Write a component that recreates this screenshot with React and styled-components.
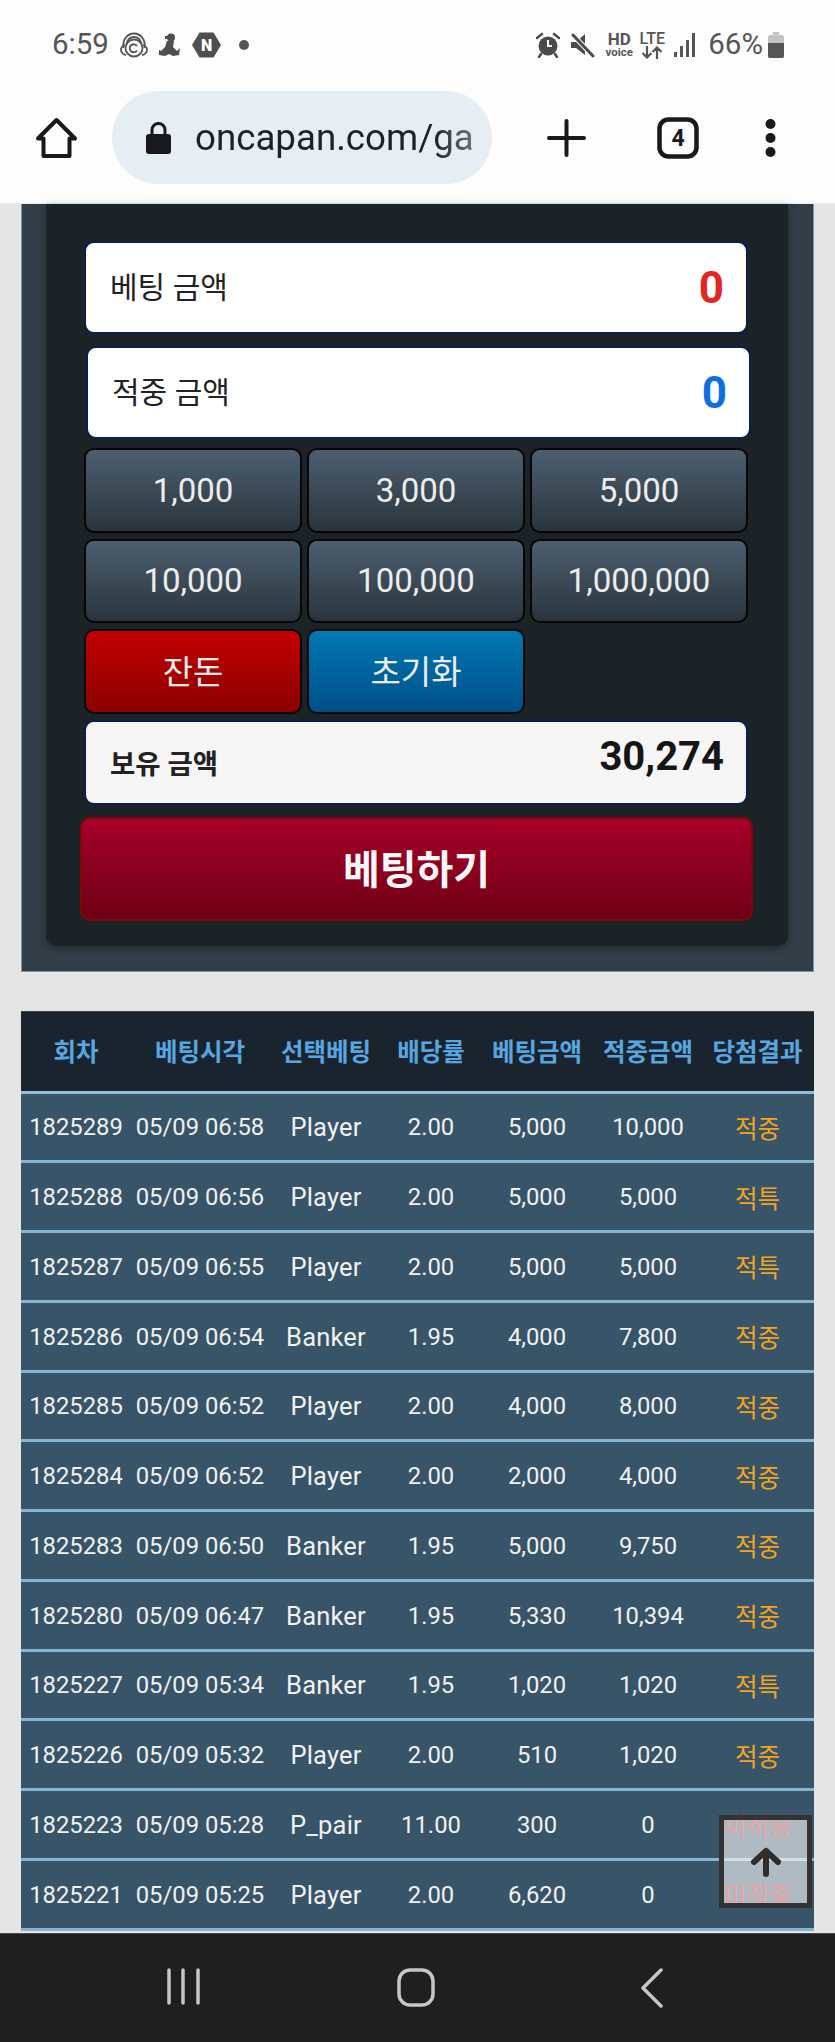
import styled, { createGlobalStyle } from 'styled-components';

const GlobalStyle = createGlobalStyle`
  html, body {
    margin: 0;
    padding: 0;
    background: #e5e5e5;
  }
  * {
    box-sizing: border-box;
  }
`;

const Screen = styled.div`
  position: relative;
  width: 835px;
  height: 2042px;
  overflow: hidden;
  display: flex;
  flex-direction: column;
  font-family: Roboto, "Noto Sans CJK KR", sans-serif;
  background: #e5e5e5;
`;

const Chrome = styled.header`
  height: 204px;
  flex: none;
  background: #fdfdfe;
  border-bottom: 1px solid #e8edf1;
`;

const StatusBar = styled.div`
  height: 90px;
  display: flex;
  align-items: center;
  justify-content: space-between;
  padding: 0 51px 0 52px;
  color: #555;
`;

const StatusGroup = styled.div`
  display: flex;
  align-items: center;
`;

const StatusText = styled.span`
  font-size: 29.5px;
  line-height: 1;
  margin-right: ${props => props.$mr || 0}px;
  margin-left: ${props => props.$ml || 0}px;
`;

const StatusIcon = styled.svg`
  display: block;
  flex: none;
  margin-left: ${props => props.$ml || 0}px;
`;

const HdBadge = styled.div`
  display: flex;
  flex-direction: column;
  align-items: center;
  margin-left: ${props => props.$ml}px;
  width: 26px;
  color: #555;
  font-weight: 700;
  font-size: 17px;
  line-height: 15px;
  small {
    display: block;
    font-size: 11.5px;
    font-weight: 700;
    line-height: 11px;
  }
`;

const LteBadge = styled(HdBadge)`
  font-weight: 500;
  font-size: 16px;
  line-height: 14px;
`;

const ToolRow = styled.div`
  height: 113px;
  display: flex;
  align-items: flex-start;
  padding-left: 35px;
`;

const ToolIcon = styled.svg`
  display: block;
  flex: none;
  margin-left: ${props => props.$ml || 0}px;
  margin-top: ${props => props.$mt || 0}px;
`;

const UrlPill = styled.div`
  width: 380px;
  height: 93px;
  margin-left: 34px;
  margin-top: 1px;
  border-radius: 47px;
  background: #e6edf3;
  display: flex;
  align-items: center;
  padding-left: 34px;
`;

const LockIcon = styled.svg`
  display: block;
  flex: none;
`;

const UrlText = styled.div`
  width: 278px;
  margin-left: 24px;
  overflow: hidden;
  white-space: nowrap;
  font-size: 36.7px;
  color: #1c2226;
  -webkit-mask-image: linear-gradient(90deg, #000 86%, rgba(0, 0, 0, 0.6) 100%);
  mask-image: linear-gradient(90deg, #000 86%, rgba(0, 0, 0, 0.6) 100%);
`;

const Main = styled.main`
  flex: 1;
  padding: 0 21px;
  min-height: 0;
`;

const OuterPanel = styled.section`
  background: #323e47;
  border: 1px solid #7d95a8;
  border-top: 0;
  padding: 0 25px 25px 24px;
`;

const InnerPanel = styled.div`
  background: #1c2326;
  border-radius: 0 0 10px 10px;
  box-shadow: 0 2px 8px rgba(0, 0, 0, 0.35);
  padding: 37px 40px 25px 38px;
`;

const AmountBox = styled.div`
  display: flex;
  align-items: center;
  justify-content: space-between;
  height: 93px;
  margin: ${props => (props.$shift ? '12px -3px 0 2px' : '0')};
  background: #fff;
  border: 2px solid #0b1d55;
  border-radius: 10px;
  padding: 0 22px 0 24px;
`;

const AmountLabel = styled.span`
  font-size: 30px;
  color: #222;
  position: relative;
  top: -3px;
`;

const AmountValue = styled.span`
  font-size: 44px;
  font-weight: 700;
  color: ${props => props.$color};
`;

const ChipGrid = styled.div`
  display: grid;
  grid-template-columns: repeat(3, 1fr);
  grid-auto-rows: 84.5px;
  column-gap: 5px;
  row-gap: 6px;
  margin: 9px 0 0;
`;

const Chip = styled.button`
  border: 2px solid #060606;
  border-radius: 10px;
  padding: 0 0 ${props => props.$lift || 0}px;
  font-family: inherit;
  font-size: 33px;
  color: #ececec;
  background: linear-gradient(180deg, ${props => props.$from || '#4c5f70'}, ${props => props.$to || '#2a343c'});
`;

const HoldBox = styled(AmountBox)`
  height: 85px;
  margin-top: 6px;
  background: #f6f6f6;
`;

const HoldLabel = styled.span`
  font-size: 27.5px;
  font-weight: 700;
  color: #222;
`;

const HoldValue = styled.span`
  font-size: 40px;
  font-weight: 700;
  color: #151515;
  position: relative;
  top: -6px;
`;

const BetButton = styled.button`
  display: block;
  width: 673px;
  height: 104px;
  margin: 12px 0 0 -4px;
  padding: 0 0 4px;
  border: 2px solid #7c0808;
  border-radius: 10px;
  font-family: inherit;
  font-size: 40px;
  font-weight: 700;
  color: #f7f7f7;
  background: linear-gradient(180deg, #a8002a, #6d0014);
`;

const Board = styled.div`
  margin-top: 39px;
`;

const columns = '110px 138px 114px 96px 116px 106px 113px';

const HeadRow = styled.div`
  display: grid;
  grid-template-columns: ${columns};
  align-items: center;
  height: 83px;
  padding-bottom: 2px;
  background: #19242e;
  border-top: 1px solid #3a4650;
  border-bottom: 3px solid #92bdd8;
  color: #57a6e0;
  font-size: 24.5px;
  font-weight: 700;
  text-align: center;
  white-space: nowrap;
`;

const DataRow = styled.div`
  display: grid;
  grid-template-columns: ${columns};
  align-items: center;
  height: 69.75px;
  padding-top: 1px;
  background: #375469;
  border-bottom: 3px solid #86b5d3;
  color: #f1f1f1;
  font-size: 23.8px;
  text-align: center;
  white-space: nowrap;
`;

const PickCell = styled.span`
  font-size: 25.5px;
  letter-spacing: 0.2px;
`;

const Result = styled.span`
  font-size: 24.5px;
  color: ${props => (props.$miss ? '#d81414' : '#f2a421')};
`;

const NavBar = styled.nav`
  height: 109px;
  flex: none;
  background: #1f1f1f;
  border-top: 1px solid #4a4a4a;
  display: flex;
  align-items: flex-start;
  padding: 34px 0 0 165px;
`;

const TopButton = styled.button`
  position: absolute;
  left: 719px;
  top: 1815px;
  width: 93px;
  height: 93px;
  padding: 0;
  display: flex;
  align-items: center;
  justify-content: center;
  background: rgba(255, 255, 255, 0.6);
  border: 5px solid #333;
`;

const rows = [
  ['1825289', '05/09 06:58', 'Player', '2.00', '5,000', '10,000', '적중'],
  ['1825288', '05/09 06:56', 'Player', '2.00', '5,000', '5,000', '적특'],
  ['1825287', '05/09 06:55', 'Player', '2.00', '5,000', '5,000', '적특'],
  ['1825286', '05/09 06:54', 'Banker', '1.95', '4,000', '7,800', '적중'],
  ['1825285', '05/09 06:52', 'Player', '2.00', '4,000', '8,000', '적중'],
  ['1825284', '05/09 06:52', 'Player', '2.00', '2,000', '4,000', '적중'],
  ['1825283', '05/09 06:50', 'Banker', '1.95', '5,000', '9,750', '적중'],
  ['1825280', '05/09 06:47', 'Banker', '1.95', '5,330', '10,394', '적중'],
  ['1825227', '05/09 05:34', 'Banker', '1.95', '1,020', '1,020', '적특'],
  ['1825226', '05/09 05:32', 'Player', '2.00', '510', '1,020', '적중'],
  ['1825223', '05/09 05:28', 'P_pair', '11.00', '300', '0', '미적중'],
  ['1825221', '05/09 05:25', 'Player', '2.00', '6,620', '0', '미적중'],
];

const heads = ['회차', '베팅시각', '선택베팅', '배당률', '베팅금액', '적중금액', '당첨결과'];
const chips = ['1,000', '3,000', '5,000', '10,000', '100,000', '1,000,000'];

const App = () => (
  <Screen>
    <GlobalStyle />
    <Chrome>
      <StatusBar>
        <StatusGroup>
          <StatusText $mr={11}>6:59</StatusText>
          <StatusIcon width="28" height="26" viewBox="0 0 28 26" fill="none" stroke="#555" strokeWidth="1.8">
            <path d="M3.5 16C2 7 8 1.5 14 1.5S26 7 24.5 16" />
            <path d="M6.5 12C7.5 7 10.5 5 14 5s6.5 2 7.5 7" />
            <circle cx="14" cy="16" r="8.5" />
            <path d="M17 14a4 4 0 1 0 0 4.5" />
            <path d="M5 13c-3 1-4 3-4 5s2 5 5 5M23 13c3 1 4 3 4 5s-2 5-5 5" />
          </StatusIcon>
          <StatusIcon $ml={11} width="21" height="24" viewBox="0 0 21 24" fill="#4f4f4f">
            <circle cx="12" cy="4.5" r="4" />
            <path d="M8 8h7l-1 6 4 4 3-3-1 7-6 1-4-2-4 2-6-1-1-6 3 2 4-4z" />
            <path d="M6 3h4v3H6z" />
          </StatusIcon>
          <StatusIcon $ml={12} width="29" height="26" viewBox="0 0 29 26">
            <path d="M7.5 0.5h14L29 13l-7.5 12.5h-14L0 13z" fill="#4f4f4f" />
            <text x="14.5" y="19" textAnchor="middle" fontSize="16" fontWeight="900" fontFamily="Roboto, sans-serif" fill="#fff">N</text>
          </StatusIcon>
          <StatusIcon $ml={18} width="10" height="10" viewBox="0 0 10 10">
            <circle cx="5" cy="5" r="5" fill="#555" />
          </StatusIcon>
        </StatusGroup>
        <StatusGroup>
          <StatusIcon width="24" height="26" viewBox="0 0 24 26" fill="none">
            <circle cx="12" cy="14" r="9.5" fill="#4b4b4b" />
            <path d="M12 8v6h4" stroke="#fdfdfe" strokeWidth="2" />
            <path d="M1 6l5-4M23 6l-5-4M5 22l-2 3M19 22l2 3" stroke="#4b4b4b" strokeWidth="2.5" strokeLinecap="round" />
          </StatusIcon>
          <StatusIcon $ml={10} width="25" height="26" viewBox="0 0 25 26" fill="#4b4b4b">
            <path d="M1 10h5l9-8v21l-9-7H1z" />
            <path d="M3 3l20 21" stroke="#fdfdfe" strokeWidth="5" />
            <path d="M3 3l20 21" stroke="#4b4b4b" strokeWidth="3" strokeLinecap="round" />
          </StatusIcon>
          <HdBadge $ml={11}>
            HD
            <small>voice</small>
          </HdBadge>
          <LteBadge $ml={7}>
            LTE
            <svg width="22" height="13" viewBox="0 0 22 13" fill="none" stroke="#555" strokeWidth="2.2">
              <path d="M6 0v11M1.5 7L6 11.5 10.5 7M16 13V2M11.5 6L16 1.5 20.5 6" />
            </svg>
          </LteBadge>
          <StatusIcon $ml={9} width="22" height="24" viewBox="0 0 22 24" fill="#555">
            <rect x="0" y="19" width="3" height="5" />
            <rect x="6" y="13" width="3" height="11" />
            <rect x="12" y="7" width="3" height="17" />
            <rect x="18" y="0" width="3" height="24" />
          </StatusIcon>
          <StatusText $ml={12}>66%</StatusText>
          <StatusIcon $ml={5} width="16" height="26" viewBox="0 0 16 26">
            <path d="M5 0h6v3h3a2 2 0 0 1 2 2v19a2 2 0 0 1-2 2H2a2 2 0 0 1-2-2V5a2 2 0 0 1 2-2h3z" fill="#c4c4c4" />
            <path d="M0 11h16v13a2 2 0 0 1-2 2H2a2 2 0 0 1-2-2z" fill="#555" />
          </StatusIcon>
        </StatusGroup>
      </StatusBar>
      <ToolRow>
        <ToolIcon $mt={27} width="43" height="42" viewBox="0 0 43 42" fill="none" stroke="#17191c" strokeWidth="4" strokeLinejoin="round">
          <path d="M21.5 3L40 21.5h-5.5V39h-26V21.5H3z" />
        </ToolIcon>
        <UrlPill>
          <LockIcon width="25" height="32" viewBox="0 0 25 32">
            <path d="M6 13V8a6.5 6.5 0 0 1 13 0v5" fill="none" stroke="#17191c" strokeWidth="3" />
            <rect x="0" y="12" width="25" height="20" rx="3" fill="#17191c" />
          </LockIcon>
          <UrlText>oncapan.com/ga</UrlText>
        </UrlPill>
        <ToolIcon $ml={55} $mt={29} width="39" height="38" viewBox="0 0 39 38" fill="none" stroke="#17191c" strokeWidth="4" strokeLinecap="round">
          <path d="M19.5 2v34M2 19h35" />
        </ToolIcon>
        <ToolIcon $ml={71} $mt={27} width="42" height="42" viewBox="0 0 42 42">
          <rect x="2.5" y="2.5" width="37" height="37" rx="9" fill="none" stroke="#17191c" strokeWidth="4.5" />
          <text x="21" y="29" textAnchor="middle" fontSize="23" fontWeight="700" fontFamily="Roboto, sans-serif" fill="#17191c">4</text>
        </ToolIcon>
        <ToolIcon $ml={66} $mt={29} width="11" height="38" viewBox="0 0 11 38" fill="#17191c">
          <circle cx="5.5" cy="5" r="5" />
          <circle cx="5.5" cy="19" r="5" />
          <circle cx="5.5" cy="33" r="5" />
        </ToolIcon>
      </ToolRow>
    </Chrome>

    <Main>
      <OuterPanel>
        <InnerPanel>
          <AmountBox>
            <AmountLabel>베팅 금액</AmountLabel>
            <AmountValue $color="#e42522">0</AmountValue>
          </AmountBox>
          <AmountBox $shift>
            <AmountLabel>적중 금액</AmountLabel>
            <AmountValue $color="#0f6fdf">0</AmountValue>
          </AmountBox>
          <ChipGrid>
            {chips.map(c => (
              <Chip key={c}>{c}</Chip>
            ))}
            <Chip $from="#c20000" $to="#8c0000" $lift={3}>잔돈</Chip>
            <Chip $from="#0079b5" $to="#004f88" $lift={3}>초기화</Chip>
          </ChipGrid>
          <HoldBox>
            <HoldLabel>보유 금액</HoldLabel>
            <HoldValue>30,274</HoldValue>
          </HoldBox>
          <BetButton>베팅하기</BetButton>
        </InnerPanel>
      </OuterPanel>

      <Board>
        <HeadRow>
          {heads.map(h => (
            <span key={h}>{h}</span>
          ))}
        </HeadRow>
        {rows.map(r => (
          <DataRow key={r[0]}>
            <span>{r[0]}</span>
            <span>{r[1]}</span>
            <PickCell>{r[2]}</PickCell>
            <span>{r[3]}</span>
            <span>{r[4]}</span>
            <span>{r[5]}</span>
            <Result $miss={r[6] === '미적중'}>{r[6]}</Result>
          </DataRow>
        ))}
      </Board>
    </Main>

    <NavBar>
      <ToolIcon width="38" height="38" viewBox="0 0 38 38" fill="none" stroke="#c6c6c6" strokeWidth="3.5" strokeLinecap="round">
        <path d="M4 2v33M18 2v33M33 2v33" />
      </ToolIcon>
      <ToolIcon $ml={194} width="38" height="39" viewBox="0 0 38 39" fill="none" stroke="#c6c6c6" strokeWidth="3.5">
        <rect x="2" y="2" width="34" height="35" rx="11" />
      </ToolIcon>
      <ToolIcon $ml={205} width="24" height="40" viewBox="0 0 24 40" fill="none" stroke="#c6c6c6" strokeWidth="3.5" strokeLinecap="round" strokeLinejoin="round">
        <path d="M21 2L3 20l18 18" />
      </ToolIcon>
    </NavBar>

    <TopButton aria-label="top">
      <svg width="32" height="30" viewBox="0 0 32 30" fill="none" stroke="#2e2e2e" strokeWidth="6" strokeLinecap="round" strokeLinejoin="round">
        <path d="M16 27V4M4 15L16 4l12 11" />
      </svg>
    </TopButton>
  </Screen>
);

export default App;
